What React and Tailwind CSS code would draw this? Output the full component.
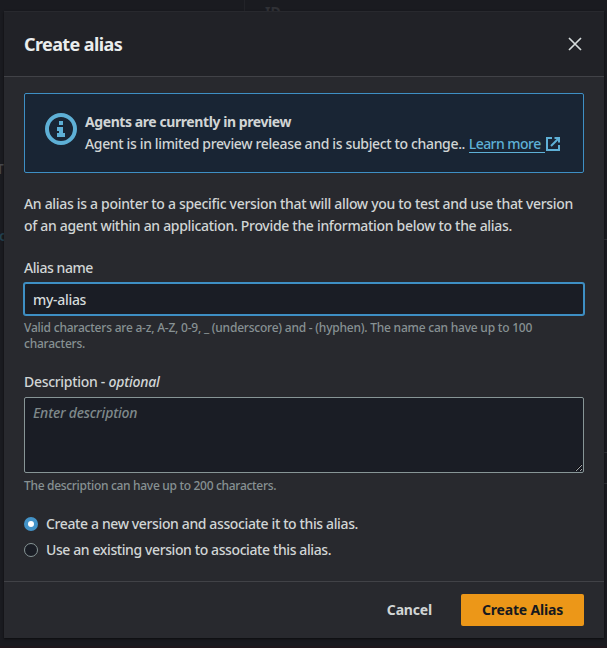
import React from "react";

function InfoIcon() {
  return (
    <svg className="size-8 shrink-0" viewBox="0 0 32 32" fill="none">
      <circle cx="16" cy="16" r="14" stroke="#5eb0d6" strokeWidth="4" />
      <path d="M14 8h4v4h-4zM12 14h6v6h2v4h-8v-4h2v-2h-2z" fill="#5eb0d6" />
    </svg>
  );
}

function ExternalIcon() {
  return (
    <svg className="inline-block size-4 align-[-3px]" viewBox="0 0 16 16" fill="none" stroke="#5eb0d6" strokeWidth="2">
      <path d="M9.5 2H14v4.5M6 10l8-8" />
      <path d="M7 2H2v12h12V9" />
    </svg>
  );
}

function CloseIcon() {
  return (
    <svg className="size-4" viewBox="0 0 16 16" fill="none" stroke="#d5dbdb" strokeWidth="1.7">
      <path d="M2 2l12 12M14 2L2 14" />
    </svg>
  );
}

function Backdrop() {
  return (
    <div className="absolute inset-0 overflow-hidden text-sm text-[#303136]" aria-hidden="true">
      <div className="absolute left-[244px] top-0 h-3 w-px bg-[#222328]" />
      <div className="absolute left-[265px] top-[4px] font-bold leading-4">ID</div>
      <div className="absolute -left-[4px] top-[161px] font-semibold leading-4 text-[#46474b]">T</div>
      <div className="absolute -left-[1px] top-[228px] font-semibold leading-4 text-[#23414f]">c</div>
      <div className="absolute right-0 top-[239px] h-px w-[3px] bg-[#303136]" />
      <div className="absolute right-0 top-[452px] h-px w-[3px] bg-[#303136]" />
      <div className="absolute right-0 top-[483px] h-px w-[3px] bg-[#303136]" />
      <div className="absolute bottom-0 h-0.5 w-full bg-[#1f181d]" />
    </div>
  );
}

export default function App() {
  return (
    <div className="relative h-[648px] w-[607px] overflow-hidden bg-[#1a1b20] font-['Noto_Sans','Open_Sans',sans-serif] text-sm font-medium leading-[22px] text-[#d1d5d5]">
      <Backdrop />
      <div className="relative ml-1 mt-[11px] flex h-[627px] w-[600px] flex-col bg-[#28292e] shadow-[0_1px_2px_0_rgba(0,0,0,0.6)]">
        <header className="flex h-[66px] shrink-0 items-center justify-between border-y border-b-[#414247] border-t-[#28292e] bg-[#212227] px-5">
          <h2 className="text-lg font-bold tracking-[-0.6px] text-[#eaeded]">Create alias</h2>
          <button className="mr-px" aria-label="Close">
            <CloseIcon />
          </button>
        </header>

        <main className="flex flex-col px-5 pt-4">
          <div className="flex h-20 shrink-0 gap-2 rounded-[2px] border border-[#3e8fc4] bg-[#192534] pl-5 pt-[17px]">
            <div className="pt-0.5">
              <InfoIcon />
            </div>
            <div className="whitespace-nowrap">
              <div className="font-bold tracking-[-0.42px]">Agents are currently in preview</div>
              <div>
                <span className="tracking-[-0.353px]">Agent is in limited preview release and is subject to change..</span>{" "}
                <a className="text-[#5eb0d6]">
                  <span className="inline-block h-5 w-[76px] border-b border-[#5eb0d6] leading-[22px] tracking-[-0.53px]">Learn more</span>
                  <ExternalIcon />
                </a>
              </div>
            </div>
          </div>

          <p className="mt-5 whitespace-nowrap">
            <span className="block tracking-[-0.314px]">An alias is a pointer to a specific version that will allow you to test and use that version</span>
            <span className="block tracking-[-0.31px]">of an agent within an application. Provide the information below to the alias.</span>
          </p>

          <label className="mt-5 tracking-[-0.43px]">Alias name</label>
          <input
            className="mt-1 h-8 rounded-[2px] border border-[#3e8fc4] bg-[#1a1d25] px-2 tracking-[-0.3px] text-[#d5dbdb] shadow-[0_0_0_1px_#3e8fc4] outline-none"
            defaultValue="my-alias"
          />
          <p className="mt-[5px] whitespace-nowrap text-xs leading-4 tracking-[-0.223px] text-[#879193]">
            Valid characters are a-z, A-Z, 0-9, _ (underscore) and - (hyphen). The name can have up to 100
            <br />
            characters.
          </p>

          <label className="mt-[19px] tracking-[-0.3px]">
            Description - <i className="tracking-[-0.2px]">optional</i>
          </label>
          <textarea
            className="mt-1 h-[76px] resize rounded-[2px] border border-[#879596] bg-[#1a1d25] px-2 py-1 tracking-[-0.2px] outline-none placeholder:italic placeholder:text-[#7f898b]"
            placeholder="Enter description"
          />
          <p className="mt-[5px] text-xs leading-4 tracking-[-0.31px] text-[#879193]">The description can have up to 200 characters.</p>

          <div className="mt-[19px] flex flex-col gap-1">
            <label className="flex items-center gap-2 tracking-[-0.375px]">
              <span className="flex size-3.5 items-center justify-center rounded-full bg-[#4393c8]">
                <span className="size-1.5 rounded-full bg-white" />
              </span>
              Create a new version and associate it to this alias.
            </label>
            <label className="flex items-center gap-2 tracking-[-0.4px]">
              <span className="size-3.5 rounded-full border border-[#879596] bg-[#1a1d25]" />
              Use an existing version to associate this alias.
            </label>
          </div>
        </main>

        <footer className="mt-auto flex h-[57px] shrink-0 items-center justify-end border-t border-[#414247] px-5 font-bold tracking-[-0.18px]">
          <button className="mr-[29px]">Cancel</button>
          <button className="h-8 w-[123px] rounded-[2px] bg-[#ec9718] text-[#16191f]">Create Alias</button>
        </footer>
      </div>
    </div>
  );
}
